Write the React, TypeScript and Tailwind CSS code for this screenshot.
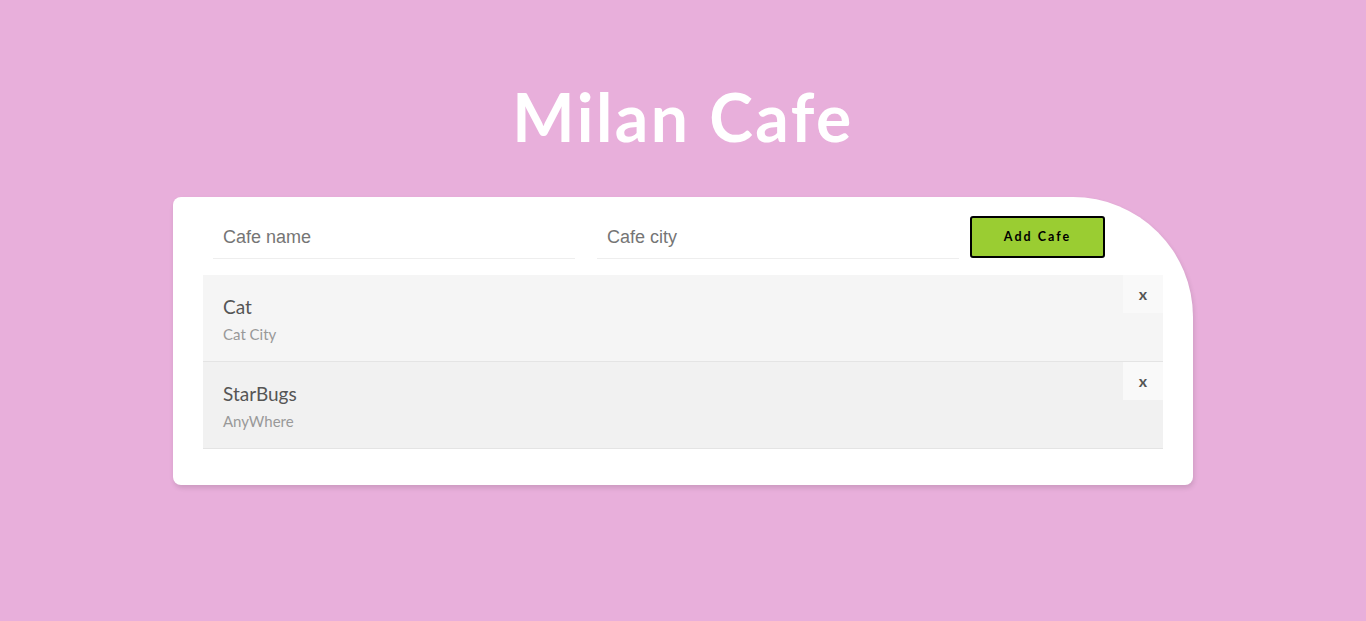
const cafes = [
  { name: "Cat", city: "Cat City" },
  { name: "StarBugs", city: "AnyWhere" },
];

export default function App() {
  return (
    <div className="min-h-[621px] bg-[#e8afdb] font-['Lato',sans-serif]">
      <h1 className="pt-[79px] text-center text-[66px] font-bold leading-[76px] tracking-[2.5px] text-white">
        Milan Cafe
      </h1>
      <div className="mx-auto mt-[42px] w-[1020px] rounded-[8px] rounded-tr-[120px] bg-white px-[30px] pt-[19px] pb-[36px] shadow-[1px_3px_5px_rgba(0,0,0,0.12)]">
        <form className="flex items-start" onSubmit={(e) => e.preventDefault()}>
          <input
            type="text"
            placeholder="Cafe name"
            className="ml-[10px] h-[43px] w-[362px] border-b border-[#eeeeee] px-[10px] font-['Liberation_Sans',Arial,sans-serif] text-[18px] text-[#555] outline-none placeholder:text-[#757575]"
          />
          <input
            type="text"
            placeholder="Cafe city"
            className="ml-[22px] h-[43px] w-[362px] border-b border-[#eeeeee] px-[10px] font-['Liberation_Sans',Arial,sans-serif] text-[18px] text-[#555] outline-none placeholder:text-[#757575]"
          />
          <button
            type="submit"
            className="ml-[11px] h-[42px] w-[135px] rounded-[3px] border-2 border-black bg-[#9acd32] text-[12.5px] font-bold tracking-[2px] text-black"
          >
            Add Cafe
          </button>
        </form>
        <ul className="mt-[16px]">
          {cafes.map((c, i) => (
            <li
              key={c.name}
              className={`relative border-b border-[#e4e4e4] px-[20px] pt-[20px] pb-[18px] ${
                i % 2 === 0 ? "bg-[#f5f5f5]" : "bg-[#f1f1f1]"
              }`}
            >
              <span className="block text-[19px] leading-[24px] text-[#555]">{c.name}</span>
              <span className="mt-[6px] block text-[15px] leading-[18px] text-[#999]">{c.city}</span>
              <div className="absolute top-0 right-0 flex h-[38px] w-[40px] items-center justify-center bg-[#f9f9f9] text-[16px] font-bold text-[#555]">
                x
              </div>
            </li>
          ))}
        </ul>
      </div>
    </div>
  );
}
